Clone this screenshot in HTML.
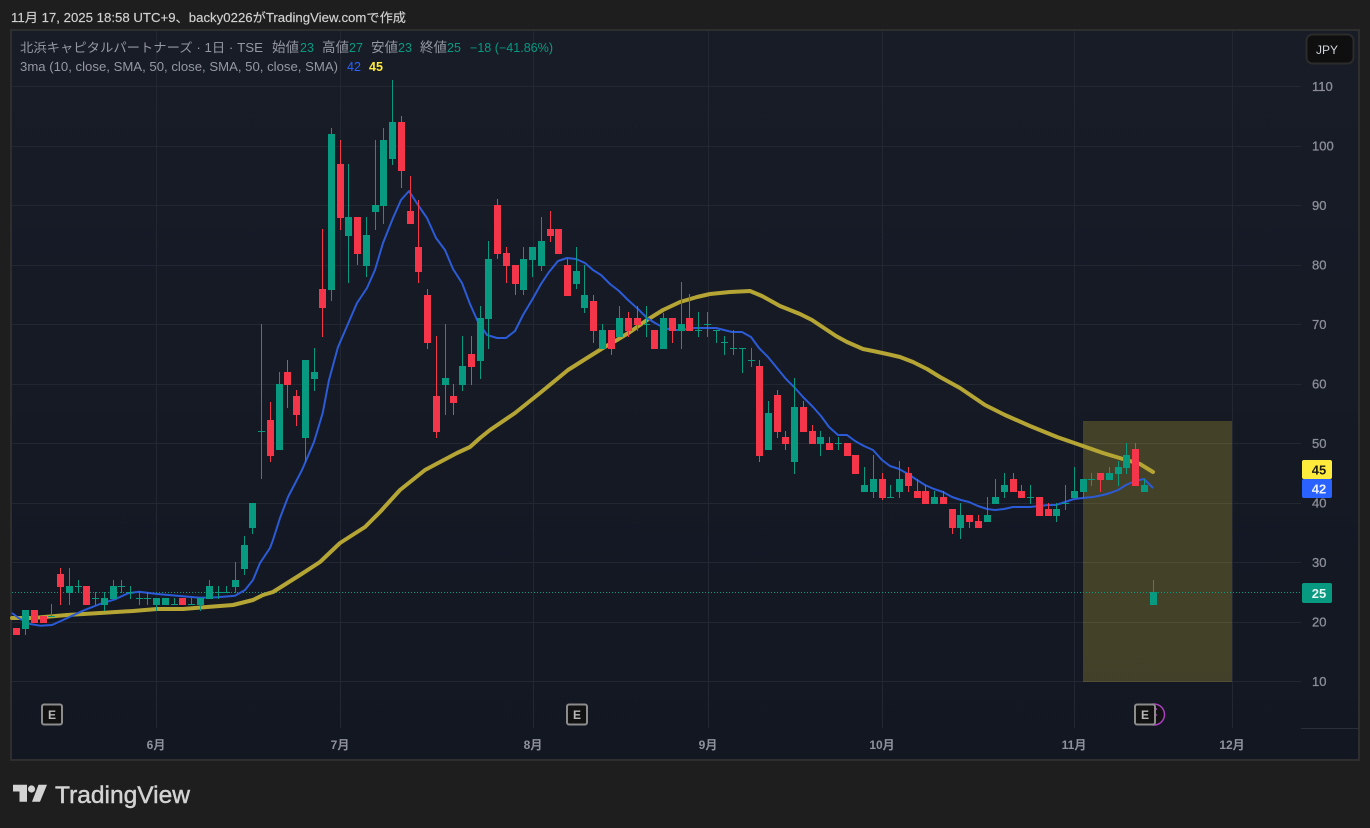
<!DOCTYPE html>
<html lang="ja"><head><meta charset="utf-8"><title>TradingView chart</title>
<style>
html,body{margin:0;padding:0;background:#1e1e1e;width:1370px;height:828px;overflow:hidden}
svg{display:block;position:absolute;left:0;top:0}
text{font-family:"Liberation Sans","Noto Sans CJK JP",sans-serif}
</style></head><body>
<svg width="1370" height="828" viewBox="0 0 1370 828" xmlns="http://www.w3.org/2000/svg">
<defs><linearGradient id="bg" x1="0" y1="0" x2="0" y2="1"><stop offset="0" stop-color="#181c27"/><stop offset="1" stop-color="#131722"/></linearGradient></defs>
<rect width="1370" height="828" fill="#1e1e1e"/>
<text x="11" y="22" font-size="12.5" fill="#d1d1d1" stroke="#d1d1d1" stroke-width=".15" textLength="395" lengthAdjust="spacingAndGlyphs">11月 17, 2025 18:58 UTC+9、backy0226がTradingView.comで作成</text>
<rect x="11" y="30" width="1348" height="730" fill="url(#bg)" stroke="#2e2e2e" stroke-width="2"/>
<!-- grid -->
<path shape-rendering="crispEdges" stroke="#232732" stroke-width="1" fill="none" d="M156.5 31V728M340.5 31V728M533.5 31V728M708.5 31V728M882.5 31V728M1074.5 31V728M1232.5 31V728M12 86.5H1301M12 146.5H1301M12 205.5H1301M12 265.5H1301M12 324.5H1301M12 384.5H1301M12 443.5H1301M12 503.5H1301M12 562.5H1301M12 622.5H1301M12 681.5H1301"/>
<path shape-rendering="crispEdges" stroke="#2a2e39" d="M1301 728.5H1358" fill="none"/>
<!-- box -->
<rect x="1083" y="421" width="149" height="261" fill="#ffe53b" fill-opacity=".2"/>
<!-- last price line -->
<path d="M12 592.5H1301" stroke="#089981" stroke-width="1" stroke-dasharray="1 2" fill="none"/>
<!-- MA lines -->
<polyline fill="none" stroke="#b5a535" stroke-width="4" stroke-linejoin="round" stroke-linecap="round" points="12,618 33,618 67,615 100,613 133,611 157,609 183,609 207,607 233,605 253,600 263,595 273,592 300,575 320,562 340,543 365,527 380,512 400,490 425,470 440,462 457,453 470,447 480,438 490,430 515,413 540,393 568,370 587,358 603,348 617,340 630,332 647,320 663,310 680,302 697,297 710,294 730,292 750,291 762,296 780,306 800,314 812,320 827,330 836,336 847,342 863,349 873,351 887,354 900,357 913,362 927,369 940,377 960,388 985,405 1005,415 1030,426 1057,437 1083,446 1103,453 1123,459 1140,464 1153,472"/>
<polyline fill="none" stroke="#2b5bd7" stroke-width="2" stroke-linejoin="round" points="12,613 20,619 30,624 40,625.7 52,625 63,620 83,610.7 100,604 115,599.3 128,593.3 139,591.7 157,594 177,595.7 200,597.7 217,597.3 235,595.7 245,590 253,580 260,563 270,548 273,540 280,518 288,497 302,470 314,442 322.7,413 329,380 338,347 357,303 367,288 375,270 383,243 393,218 401,200 409,191 418,205 427,218 436,238 445,250 453,269 462,283 470,304 478,322 487,335 497,338 506,338 515,331 523,315 532,300 541,284 549,272 558,261 567,258 576,259 585,263 593,270 601,275 610,284 619,291 628,300 638,309 647,318 655,323 664,328 673,330 682,330 692,328 700,328 716,328 732,332 742,332 751,337 759,348 768,357 777,368 786,379 795,388 803,397 813,407 821,416 829,427 838,435 847,435 855,441 864,446 873,450 882,460 890,466 899,469 908,474 917,480 925,485 934,489 943,492 952,497 961,500 969,502 978,506 987,509 995,510 1004,509 1013,507 1021,507 1030,507 1039,506 1048,505 1056,505 1065,502 1074,499 1083,498 1093,497 1103,495 1110,493 1118,490 1126,485 1135,481 1144,479 1153,488"/>
<!-- candles -->
<g shape-rendering="crispEdges" fill="none">
<path stroke="#089981" stroke-width="1" d="M25.5 610V635M51.5 604V617M69.5 568V605M78.5 580V593M95.5 592V605M104.5 592V611M113.5 580V599M121.5 580V593M130.5 586V599M139.5 592V605M147.5 592V605M156.5 598V611M174.5 598V605M191.5 598V605M200.5 598V611M209.5 580V599M218.5 586V599M226.5 586V593M235.5 562V593M244.5 536V575M252.5 503V534M261.5 324V479M279.5 372V450M305.5 360V462M314.5 348V391M331.5 128V301M348.5 164V283M366.5 217V277M375.5 140V230M383.5 128V224M392.5 80V165M445.5 324V415M462.5 336V391M480.5 306V379M488.5 241V349M523.5 247V295M532.5 247V277M541.5 217V271M576.5 247V289M584.5 265V313M602.5 324V349M619.5 306V337M646.5 306V337M663.5 313V349M681.5 282V349M698.5 312V337M707.5 312V337M716.5 330V343M724.5 336V355M733.5 330V355M742.5 348V373M751.5 348V367M768.5 401V450M794.5 378V474M820.5 431V456M838.5 437V450M864.5 467V492M873.5 455V498M890.5 485V498M899.5 461V498M934.5 491V504M960.5 503V539M987.5 497V522M995.5 479V504M1004.5 473V498M1030.5 485V504M1056.5 503V522M1065.5 485V510M1074.5 467V498M1083.5 479V498M1091.5 473V486M1109.5 467V480M1118.5 461V486M1126.5 443V474M1144.5 479V492M1153.5 580V605"/>
<path stroke="#089981" stroke-width="7" d="M25.5 610V629M51.5 616V617M69.5 586V593M78.5 586V587M95.5 598V599M104.5 598V605M113.5 586V599M121.5 586V587M130.5 592V593M139.5 598V599M147.5 598V599M156.5 598V605M165.5 598V605M174.5 604V605M191.5 604V605M200.5 598V605M209.5 586V599M218.5 592V593M226.5 592V593M235.5 580V587M244.5 545V569M252.5 503V528M261.5 431V432M279.5 384V450M305.5 360V438M314.5 372V379M331.5 134V290M348.5 217V236M366.5 235V266M375.5 205V212M383.5 140V206M392.5 122V159M445.5 378V385M462.5 366V385M480.5 318V361M488.5 259V319M523.5 259V290M532.5 247V260M541.5 241V266M576.5 271V284M584.5 295V308M602.5 330V349M619.5 318V337M646.5 324V325M663.5 318V349M681.5 324V331M698.5 330V331M707.5 324V325M716.5 330V331M724.5 342V343M733.5 348V349M742.5 348V349M751.5 360V361M768.5 413V450M794.5 407V462M820.5 437V444M838.5 443V444M864.5 485V492M873.5 479V492M890.5 497V498M899.5 479V492M934.5 497V504M960.5 515V528M987.5 515V522M995.5 497V504M1004.5 485V492M1030.5 497V498M1056.5 509V516M1065.5 503V504M1074.5 491V498M1083.5 479V492M1091.5 479V480M1109.5 473V480M1118.5 467V474M1126.5 455V468M1144.5 485V492M1153.5 592V605"/>
<path stroke="#f5364a" stroke-width="1" d="M60.5 568V605M270.5 402V462M287.5 360V408M296.5 390V426M322.5 229V337M340.5 140V230M357.5 217V265M401.5 116V188M410.5 176V224M418.5 200V283M427.5 289V349M436.5 336V438M453.5 384V415M471.5 336V385M497.5 199V259M506.5 247V283M515.5 265V295M550.5 211V242M567.5 259V296M593.5 295V343M611.5 330V355M628.5 312V337M637.5 306V331M672.5 318V343M689.5 294V331M759.5 360V462M777.5 390V438M785.5 431V450M803.5 401V432M812.5 425V444M829.5 437V450M882.5 473V500M908.5 467V492M917.5 479V498M925.5 485V504M943.5 491V504M952.5 509V534M969.5 515V528M978.5 515V528M1013.5 473V492M1021.5 485V498M1048.5 503V516M1100.5 473V492M1135.5 443V486"/>
<path stroke="#f5364a" stroke-width="7" d="M16.5 628V635M34.5 610V623M43.5 616V623M60.5 574V587M86.5 586V605M182.5 598V605M270.5 420V456M287.5 372V385M296.5 396V415M322.5 289V308M340.5 164V218M357.5 217V254M401.5 122V171M410.5 211V224M418.5 247V272M427.5 295V343M436.5 396V432M453.5 396V403M471.5 354V367M497.5 205V254M506.5 253V266M515.5 265V284M550.5 229V236M558.5 229V254M567.5 265V296M593.5 301V331M611.5 330V349M628.5 318V331M637.5 318V325M654.5 330V349M672.5 318V331M689.5 318V331M759.5 366V456M777.5 395V432M785.5 437V444M803.5 407V432M812.5 431V444M829.5 443V450M847.5 443V456M855.5 455V474M882.5 479V498M908.5 473V486M917.5 491V498M925.5 491V504M943.5 497V504M952.5 509V528M969.5 515V522M978.5 521V528M1013.5 479V492M1021.5 491V498M1039.5 497V516M1048.5 509V516M1100.5 473V480M1135.5 449V486"/>
</g>
<!-- price axis labels -->
<g font-size="13" fill="#8b8e97" stroke="#8b8e97" stroke-width=".3">
<text x="1312" y="91">110</text><text x="1312" y="150.5">100</text>
<text x="1312" y="210">90</text><text x="1312" y="269.5">80</text><text x="1312" y="329">70</text><text x="1312" y="388.5">60</text><text x="1312" y="448">50</text><text x="1312" y="507.5">40</text><text x="1312" y="567">30</text><text x="1312" y="626.5">20</text><text x="1312" y="686">10</text>
</g>
<!-- price tags -->
<rect x="1302" y="460" width="30" height="19" rx="2" fill="#ffeb3b"/>
<rect x="1302" y="479" width="30" height="19" rx="2" fill="#2962ff"/>
<rect x="1302" y="583" width="30" height="20" rx="2" fill="#089981"/>
<g font-size="13" font-weight="700" text-anchor="middle">
<text x="1319" y="474.5" fill="#1c1c14">45</text>
<text x="1319" y="493.5" fill="#e8eeff">42</text>
<text x="1319" y="598" fill="#e3f5f1">25</text>
</g>
<!-- time labels -->
<g font-size="12" font-weight="700" fill="#8f929c" text-anchor="middle">
<text x="156" y="749">6月</text><text x="340" y="749">7月</text><text x="533" y="749">8月</text><text x="708" y="749">9月</text><text x="882" y="749">10月</text><text x="1074" y="749">11月</text><text x="1232" y="749">12月</text>
</g>
<!-- legend -->
<g font-size="12.5" fill="#9598a1">
<text x="20" y="52" textLength="243" lengthAdjust="spacingAndGlyphs">北浜キャピタルパートナーズ · 1日 · TSE</text>
<text x="272" y="52" font-size="13.5">始値</text><text x="300" y="52" fill="#089981">23</text>
<text x="322" y="52" font-size="13.5">高値</text><text x="349" y="52" fill="#089981">27</text>
<text x="371" y="52" font-size="13.5">安値</text><text x="398" y="52" fill="#089981">23</text>
<text x="420" y="52" font-size="13.5">終値</text><text x="447" y="52" fill="#089981">25</text>
<text x="470" y="52" fill="#089981" textLength="83" lengthAdjust="spacingAndGlyphs">−18 (−41.86%)</text>
<text x="20" y="71" textLength="318" lengthAdjust="spacingAndGlyphs">3ma (10, close, SMA, 50, close, SMA, 50, close, SMA)</text>
<text x="347" y="71" fill="#2962ff">42</text>
<text x="369" y="71" fill="#ffeb3b" font-weight="700">45</text>
</g>
<!-- JPY -->
<rect x="1306.5" y="34.5" width="47" height="29" rx="6" fill="#0f0f0f" stroke="#2b2b2b" stroke-width="2"/>
<text x="1327" y="54" text-anchor="middle" font-size="12" fill="#d1d4dc">JPY</text>
<!-- dividends circle -->
<circle cx="1154" cy="714.5" r="10.5" fill="#111" stroke="#ab3fc0" stroke-width="1.5"/>
<path d="M1156.5 708v2M1157 714l-1 2" stroke="#8a3a9a" fill="none"/>
<!-- E badges -->
<g>
<rect x="42" y="704.5" width="20" height="20" rx="2" fill="#111" stroke="#8c8c8c" stroke-width="2"/>
<rect x="567" y="704.5" width="20" height="20" rx="2" fill="#111" stroke="#8c8c8c" stroke-width="2"/>
<rect x="1135" y="704.5" width="20" height="20" rx="2" fill="#111" stroke="#8c8c8c" stroke-width="2"/>
</g>
<g font-size="12" font-weight="700" fill="#b8b8b8" text-anchor="middle">
<text x="52" y="719">E</text><text x="577" y="719">E</text><text x="1145" y="719">E</text>
</g>
<!-- logo -->
<g fill="#d3d3d3">
<path d="M13 784.7H27V801.7H19.5V791.5H13Z"/>
<circle cx="31.5" cy="789" r="3.6"/>
<path d="M38.5 784.7H47L40 801.7H32Z"/>
<text x="55" y="803" font-size="24" stroke="#d3d3d3" stroke-width=".45" textLength="135" lengthAdjust="spacingAndGlyphs">TradingView</text>
</g>
</svg>
</body></html>
